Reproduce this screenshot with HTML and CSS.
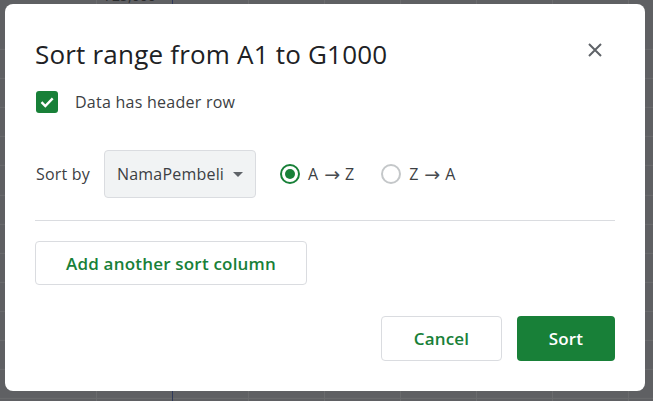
FILE: index.html
```html
<!DOCTYPE html>
<html>
<head>
<meta charset="utf-8">
<link rel="stylesheet" href="styles.css">
</head>
<body>
<div class="sheet">
  <span class="cell-text">725,000</span>
  <div class="sel-line"></div>
</div>
<div class="dialog">
  <div class="header">
    <h1 class="title">Sort range from A1 to G1000</h1>
    <button class="close" aria-label="Close">
      <svg width="14" height="14" viewBox="0 0 14 14"><path d="M1 1L13 13M13 1L1 13" stroke="#5f6368" stroke-width="2" fill="none"/></svg>
    </button>
  </div>
  <label class="check-row">
    <span class="checkbox">
      <svg width="22" height="22" viewBox="0 0 22 22"><path d="M5.5 11.2l3.8 3.8 7.4-7.6" stroke="#fff" stroke-width="2.4" fill="none"/></svg>
    </span>
    <span class="check-label">Data has header row</span>
  </label>
  <div class="sort-row">
    <span class="sort-label">Sort by</span>
    <div class="select">
      <span>NamaPembeli</span>
      <span class="caret"></span>
    </div>
    <div class="radio-opt first">
      <span class="radio on"><span class="dot"></span></span>
      <span class="radio-label">A<span class="arrow">→</span>Z</span>
    </div>
    <div class="radio-opt">
      <span class="radio"></span>
      <span class="radio-label">Z<span class="arrow">→</span>A</span>
    </div>
  </div>
  <div class="divider"></div>
  <button class="btn add">Add another sort column</button>
  <div class="footer">
    <button class="btn cancel">Cancel</button>
    <button class="btn primary">Sort</button>
  </div>
</div>
</body>
</html>
```
FILE: styles.css
```css
html, body {
  margin: 0;
  padding: 0;
  width: 653px;
  height: 401px;
  overflow: hidden;
}
body {
  background-color: #5f6063;
  font-family: "Open Sans", Roboto, "Liberation Sans", Arial, sans-serif;
  position: relative;
}
.sheet {
  position: absolute;
  inset: 0;
  background-image:
    repeating-linear-gradient(to right, transparent 0 75px, #6a6b6d 75px 76px),
    repeating-linear-gradient(to bottom, transparent 0 28.1px, #6a6b6d 28.1px 29.1px);
  background-position: 21px 0, 0 20.9px;
}
.cell-text {
  position: absolute;
  left: 104px;
  top: -12px;
  font-size: 14px;
  line-height: 16px;
  color: #2b2c2e;
}
.sel-line {
  position: absolute;
  left: 172px;
  top: 0;
  width: 1px;
  height: 401px;
  background: #2f3a5a;
}
.dialog {
  position: absolute;
  left: 5px;
  top: 4px;
  width: 640px;
  height: 387px;
  box-sizing: border-box;
  background: #fff;
  border-radius: 8px;
  padding: 34px 30px 30px 30px;
  display: flex;
  flex-direction: column;
}
.header {
  display: flex;
  justify-content: space-between;
  align-items: flex-start;
  height: 32px;
}
.title {
  margin: 0;
  font-size: 26px;
  line-height: 32px;
  font-weight: 400;
  color: #202124;
  letter-spacing: 0.2px;
}
.close {
  margin-top: -8px;
  width: 40px;
  height: 40px;
  border: none;
  background: none;
  padding: 0;
  display: flex;
  align-items: center;
  justify-content: center;
}
.check-row {
  margin-top: 20px;
  height: 24px;
  display: flex;
  align-items: center;
}
.checkbox {
  margin-left: 1px;
  width: 22px;
  height: 22px;
  border-radius: 3px;
  background: #188038;
  display: flex;
}
.check-label {
  margin-left: 17px;
  font-size: 16px;
  letter-spacing: 0.25px;
  color: #3c4043;
}
.sort-row {
  margin-top: 36px;
  height: 48px;
  display: flex;
  align-items: center;
}
.sort-label {
  margin-left: 1px;
  width: 68px;
  font-size: 16px;
  letter-spacing: 0.2px;
  color: #3c4043;
}
.select {
  width: 152px;
  height: 48px;
  box-sizing: border-box;
  border: 1px solid #dadce0;
  border-radius: 4px;
  background: #f1f3f4;
  display: flex;
  align-items: center;
  padding: 0 12px 0 12px;
  font-size: 16px;
  letter-spacing: 0.2px;
  color: #3c4043;
  justify-content: space-between;
}
.caret {
  width: 0;
  height: 0;
  border-left: 5px solid transparent;
  border-right: 5px solid transparent;
  border-top: 5px solid #5f6368;
}
.radio-opt {
  display: flex;
  align-items: center;
  margin-left: 27px;
}
.radio-opt.first {
  margin-left: 24px;
}
.radio {
  width: 20px;
  height: 20px;
  box-sizing: border-box;
  border: 2px solid #c4c7c9;
  border-radius: 50%;
  display: flex;
  align-items: center;
  justify-content: center;
}
.radio.on {
  border-color: #188038;
}
.dot {
  width: 10px;
  height: 10px;
  border-radius: 50%;
  background: #188038;
}
.radio-label {
  margin-left: 8px;
  font-size: 16px;
  color: #3c4043;
  display: flex;
  align-items: center;
}
.arrow {
  font-family: "DejaVu Sans", sans-serif;
  font-size: 19px;
  line-height: 16px;
  margin: 0 5px 0 6px;
  color: #4a4e52;
}
.divider {
  margin-top: 22px;
  height: 1px;
  background: #dadce0;
}
.btn {
  font-family: "Open Sans", Roboto, "Liberation Sans", Arial, sans-serif;
  font-size: 17px;
  font-weight: 600;
  letter-spacing: 0.2px;
  border-radius: 4px;
  box-sizing: border-box;
  cursor: pointer;
  padding: 0;
}
.add {
  margin-top: 20px;
  width: 272px;
  height: 44px;
  border: 1px solid #dadce0;
  background: #fff;
  color: #188038;
}
.footer {
  margin-top: auto;
  display: flex;
  justify-content: flex-end;
  gap: 15px;
}
.cancel {
  width: 121px;
  height: 45px;
  border: 1px solid #dadce0;
  background: #fff;
  color: #188038;
}
.primary {
  width: 98px;
  height: 45px;
  border: none;
  background: #188038;
  color: #fff;
}
```
